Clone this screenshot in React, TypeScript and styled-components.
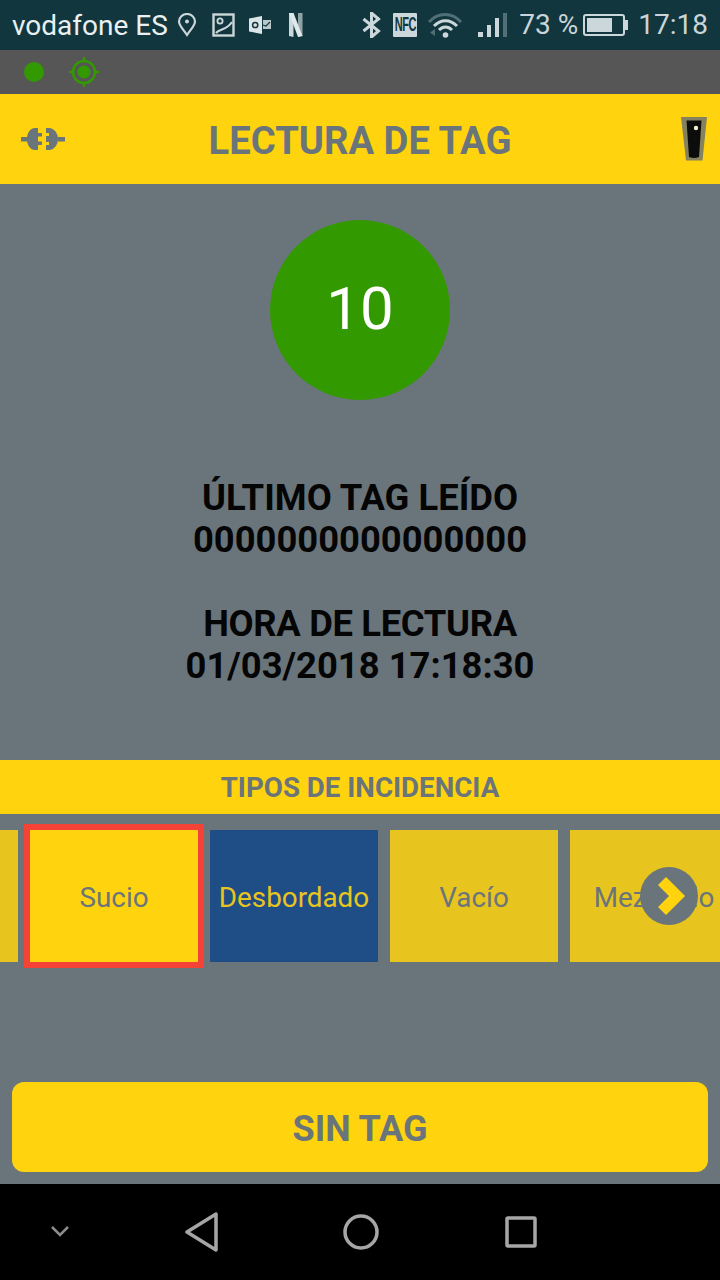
import React from "react";
import styled, { createGlobalStyle } from "styled-components";

const Global = createGlobalStyle`
  html, body { margin: 0; padding: 0; background: #6a757b; }
  * { box-sizing: border-box; }
`;
const Page = styled.div`
  width: 720px; height: 1280px; overflow: hidden; display: flex; flex-direction: column;
  font-family: Roboto, "Liberation Sans", sans-serif; background: #6a757b;
`;
const StatusBar = styled.div`
  height: 50px; flex: none; background: #12363e; color: #dfe8ea; display: flex; align-items: center;
  padding: 0 12px; font-size: 28px; line-height: 50px;
`;
const Carrier = styled.span`color: #e9f0f1; margin-top: 1px;`;
const Spacer = styled.div`flex: 1;`;
const BarIcon = styled.svg<{ $ml: number }>`flex: none; display: block; margin-left: ${p => p.$ml}px;`;
const NfcBadge = styled.span`
  flex: none; width: 24px; height: 24px; margin-left: 12px; background: #cbd7da; border-radius: 1px;
  display: flex; align-items: center; justify-content: center; overflow: hidden;
`;
const NfcLabel = styled.span`
  color: #12363e; font: 700 13px/14px "Liberation Sans", sans-serif; letter-spacing: -0.6px; transform: scale(0.85, 1.5);
`;
const Percent = styled.span`margin-left: 11px; color: #c9d5d8;`;
const Clock = styled.span`margin-left: 10px; color: #c9d5d8;`;

const SubBar = styled.div`
  height: 44px; flex: none; background: #565656; display: flex; align-items: center; padding-left: 24px; gap: 24px;
`;
const Dot = styled.span`width: 20px; height: 20px; border-radius: 50%; background: #339900; flex: none;`;

const Header = styled.header`
  height: 90px; flex: none; background: #ffd30d; display: grid; grid-template-columns: 1fr auto 1fr; align-items: center;
  padding: 0 13px;
`;
const StartIcon = styled.svg`margin-left: 8px;`;
const EndIcon = styled.svg`justify-self: end;`;
const Title = styled.h1`
  margin: 0; padding-top: 4px; font-size: 38.2px; font-weight: 700; color: #6a757b; line-height: 86px;
`;
const Main = styled.main`flex: 1; display: flex; flex-direction: column; align-items: center; min-height: 0;`;
const Counter = styled.div`
  margin-top: 36px; width: 180px; height: 180px; border-radius: 50%; background: #339900; color: #fff;
  display: flex; align-items: center; justify-content: center; font-size: 60px; flex: none; padding-bottom: 4px;
`;
const Info = styled.div`
  margin-top: 76px; padding-top: 1px; text-align: center; font-size: 36.4px; font-weight: 700; line-height: 42px; color: #050505;
`;
const InfoBlock = styled.p`margin: 0 0 42px;`;
const TightLine = styled.span`letter-spacing: -0.33px;`;
const Section = styled.div`
  margin-top: 31px; width: 100%; height: 54px; flex: none; background: #ffd30d; color: #6a757b;
  font-size: 27.7px; font-weight: 700; text-align: center; line-height: 56px;
`;
const Carousel = styled.div`
  position: relative; width: 100%; height: 154px; flex: none; overflow: hidden; padding-top: 16px;
`;
const Track = styled.div`display: flex; gap: 12px; margin-left: -150px; width: max-content;`;
const Tile = styled.div<{ $kind?: "selected" | "blue" }>`
  width: 168px; height: 132px; flex: none; display: flex; align-items: center; justify-content: center; font-size: 27.8px;
  padding-top: 2px; white-space: nowrap;
  background: ${p => p.$kind === "selected" ? "#ffd30d" : p.$kind === "blue" ? "#1f4e87" : "#e8c41e"};
  color: ${p => p.$kind === "blue" ? "#e8c41e" : "#6a757b"};
  outline: ${p => p.$kind === "selected" ? "6px solid #f44336" : "none"};
`;
const NextButton = styled.div`
  position: absolute; left: 640px; top: 53px; width: 58px; height: 58px; border-radius: 50%; background: #6a757b;
  display: flex; align-items: center; justify-content: center;
`;
const Action = styled.button`
  margin-top: 114px; width: 696px; height: 90px; flex: none; border: 0; border-radius: 12px; background: #ffd30d; color: #6a757b;
  font-family: inherit; font-size: 36px; font-weight: 700; padding: 3px 0 0;
`;
const NavBar = styled.nav`
  height: 96px; flex: none; background: #000; display: flex; align-items: center;
`;

export default function App() {
  return (
    <Page>
      <Global />
      <StatusBar>
        <Carrier>vodafone ES</Carrier>
        <BarIcon $ml={9} width="20" height="24" viewBox="0 0 20 24" fill="none" stroke="#cbd7da" strokeWidth="2.2">
          <path d="M10 22C6 16 2 12.5 2 8.5a8 7.5 0 0 1 16 0C18 12.5 14 16 10 22z" />
          <circle cx="10" cy="8.5" r="2" fill="#cbd7da" stroke="none" />
        </BarIcon>
        <BarIcon $ml={15} width="23" height="24" viewBox="0 0 23 24" fill="none" stroke="#cbd7da" strokeWidth="2.4">
          <rect x="1.5" y="1.5" width="20" height="21" />
          <circle cx="8" cy="8" r="2.6" strokeWidth="1.8" />
          <path d="M4 20 C8 15 14 18 20 9" strokeWidth="2.2" />
        </BarIcon>
        <BarIcon $ml={14} width="22" height="18" viewBox="0 0 22 18">
          <path d="M0 2.5 13 0v18L0 15.5z" fill="#dbe4e6" />
          <circle cx="6.2" cy="9" r="2.6" fill="none" stroke="#12363e" strokeWidth="1.5" />
          <path d="M14 4h8v9h-8z" fill="#b9c7ca" />
          <path d="M14 9l3 1 4-4" fill="none" stroke="#12363e" strokeWidth="1.1" />
        </BarIcon>
        <BarIcon $ml={18} width="14" height="24" viewBox="0 0 14 24">
          <path d="M0 0h4.5v24L0 23z" fill="#cbd7da" />
          <path d="M9 0h4.5v23L9 24z" fill="#8fa3a6" />
          <path d="M0 0h4.5L13.5 23 9 24z" fill="#dfe8ea" />
        </BarIcon>
        <Spacer />
        <BarIcon $ml={0} width="19" height="26" viewBox="0 0 19 26" fill="none" stroke="#cbd7da" strokeWidth="3">
          <path d="M1.5 7l15 12-7 6V1l7 6L1.5 19" />
        </BarIcon>
        <NfcBadge><NfcLabel>NFC</NfcLabel></NfcBadge>
        <BarIcon $ml={10} width="36" height="26" viewBox="0 0 36 26" fill="none">
          <path d="M2 10C11 0 25 0 34 10" stroke="#4f7076" strokeWidth="3" />
          <path d="M7 14C14 7 23 7 30 14" stroke="#cbd7da" strokeWidth="3" />
          <path d="M12 18C16 14 21 14 25 18" stroke="#cbd7da" strokeWidth="3" />
          <circle cx="18.5" cy="23" r="2.8" fill="#cbd7da" />
          <path d="M8 17v7L3 20.5z" fill="#4f7076" />
        </BarIcon>
        <BarIcon $ml={15} width="30" height="25" viewBox="0 0 30 25">
          <rect x="0" y="19" width="5" height="5" fill="#cbd7da" />
          <rect x="9" y="12" width="4" height="12" fill="#cbd7da" />
          <rect x="17" y="5" width="4" height="19" fill="#cbd7da" />
          <rect x="25" y="0" width="4" height="24" fill="#4f7076" />
        </BarIcon>
        <Percent>73 %</Percent>
        <BarIcon $ml={5} width="45" height="22" viewBox="0 0 45 22" fill="none">
          <rect x="1" y="1" width="40" height="20" rx="2" stroke="#cbd7da" strokeWidth="2" />
          <rect x="4" y="4" width="25" height="14" fill="#cbd7da" />
          <rect x="42" y="6" width="3" height="10" fill="#cbd7da" />
        </BarIcon>
        <Clock>17:18</Clock>
      </StatusBar>
      <SubBar>
        <Dot />
        <svg width="32" height="32" viewBox="0 0 32 32" fill="none">
          <circle cx="16" cy="16" r="11" stroke="#339900" strokeWidth="2.5" />
          <circle cx="16" cy="16" r="6.5" fill="#339900" />
          <path d="M16 1v5M16 26v5M1 16h5M26 16h5" stroke="#339900" strokeWidth="2.5" />
        </svg>
      </SubBar>
      <Header>
        <StartIcon width="44" height="24" viewBox="0 0 44 24" fill="#6a757b">
          <path d="M0 10h7v4.5H0zM37 10h7v4.5h-7z" />
          <path d="M17 1h-3C9 1 6 6 6 12s3 11 8 11h3v-5h4v-3.5h-4v-5h4V6h-4z" />
          <path d="M25 1h3c5 0 9 5 9 11s-4 11-9 11h-3v-5h3v-3h-3V9h3V6h-3z" />
        </StartIcon>
        <Title>LECTURA DE TAG</Title>
        <EndIcon width="26" height="44" viewBox="0 0 26 44">
          <path d="M0 0h26l-4.500 43.500H5z" fill="#85825f" />
          <path d="M5.500 3.500h15l-2.500 36.500q-5 2-10 0z" fill="#0c0c0c" />
          <circle cx="15" cy="11" r="2.200" fill="#f4f1d0" />
        </EndIcon>
      </Header>
      <Main>
        <Counter>10</Counter>
        <Info>
          <InfoBlock>ÚLTIMO TAG LEÍDO<br />0000000000000000</InfoBlock>
          <InfoBlock><TightLine>HORA DE LECTURA</TightLine><br />01/03/2018 17:18:30</InfoBlock>
        </Info>
        <Section>TIPOS DE INCIDENCIA</Section>
        <Carousel>
          <Track>
            <Tile />
            <Tile $kind="selected">Sucio</Tile>
            <Tile $kind="blue">Desbordado</Tile>
            <Tile>Vacío</Tile>
            <Tile>Mezclado</Tile>
          </Track>
          <NextButton>
            <svg width="58" height="58" viewBox="0 0 58 58">
              <path d="M26 10 45 29 26 48 18 40 29 29 18 18z" fill="#ffd30d" />
            </svg>
          </NextButton>
        </Carousel>
        <Action>SIN TAG</Action>
      </Main>
      <NavBar>
        <BarIcon $ml={50} width="20" height="12" viewBox="0 0 20 12" fill="none" stroke="#8c8c8c" strokeWidth="2.5">
          <path d="M2 1l8 8 8-8" />
        </BarIcon>
        <BarIcon $ml={115} width="34" height="40" viewBox="0 0 34 40" fill="none" stroke="#a6a6a6" strokeWidth="3.5" strokeLinejoin="round">
          <path d="M31 2v36L2 20z" />
        </BarIcon>
        <BarIcon $ml={124} width="36" height="36" viewBox="0 0 36 36" fill="none" stroke="#a6a6a6" strokeWidth="3.5">
          <circle cx="18" cy="18" r="16" />
        </BarIcon>
        <BarIcon $ml={126} width="32" height="32" viewBox="0 0 32 32" fill="none" stroke="#a6a6a6" strokeWidth="3.5">
          <rect x="2" y="2" width="28" height="28" rx="1" />
        </BarIcon>
      </NavBar>
    </Page>
  );
}
